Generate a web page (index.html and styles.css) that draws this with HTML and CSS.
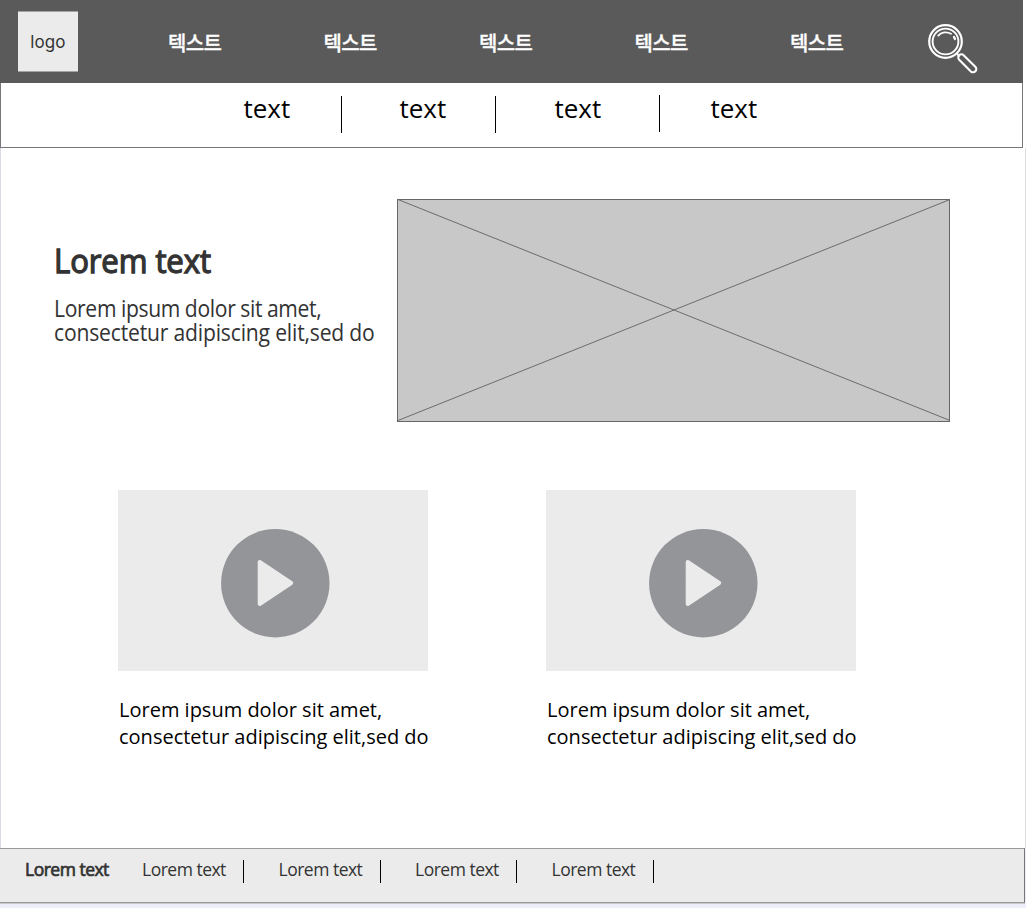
FILE: index.html
```html
<!DOCTYPE html>
<html lang="ko">
<head>
<meta charset="utf-8">
<title>Lorem text</title>
<link rel="stylesheet" href="styles.css">
</head>
<body>
<div class="page">
  <header class="header">
    <div class="logo">logo</div>
    <nav class="nav">
      <span>텍스트</span><span>텍스트</span><span>텍스트</span><span>텍스트</span><span>텍스트</span>
    </nav>
    <svg class="search" viewBox="0 0 50 50" fill="none" stroke="#fff" stroke-linecap="round" stroke-linejoin="round">
      <circle cx="17.5" cy="17.5" r="16.3" stroke-width="2.2"/>
      <circle cx="17.5" cy="17.5" r="12.9" stroke-width="1.9"/>
      <path d="M10.3 11.6C13.2 8.2 18.5 7.1 23 9.8" stroke-width="1.8"/>
      <path d="M26 13L27 15" stroke-width="2.2"/>
      <path d="M29.3 30L31 31.7" stroke-width="2"/>
      <path d="M35.6 31.2L47.3 42.8A3.1 3.1 0 0 1 42.9 47.4L31.2 35.7A3.1 3.1 0 0 1 35.6 31.2Z" stroke-width="2.1"/>
    </svg>
  </header>
  <nav class="subnav">
    <span class="item">text</span><i class="bar"></i>
    <span class="item">text</span><i class="bar"></i>
    <span class="item">text</span><i class="bar"></i>
    <span class="item">text</span>
  </nav>
  <main class="main">
    <section class="hero">
      <div class="intro">
        <h1>Lorem text</h1>
        <p><span class="lead">Lorem ipsum dolor sit amet,</span><br>consectetur adipiscing elit,sed do</p>
      </div>
      <svg class="picture" viewBox="0 0 553 223">
        <rect x=".5" y=".5" width="552" height="222" fill="#c8c8c8" stroke="#666"/>
        <path d="M1 .5L553 221.5M1 221.5L553 .5" fill="none" stroke="#6c6c6c" stroke-width="1"/>
      </svg>
    </section>
    <section class="cards">
      <article class="card">
        <div class="video">
          <svg class="play" viewBox="0 0 109 109"><circle cx="54.3" cy="54.2" r="54.2" fill="#949599"/><path d="M38.7 33L70.2 54L38.7 75Z" fill="#ebebeb" stroke="#ebebeb" stroke-width="4" stroke-linejoin="round"/></svg>
        </div>
        <p>Lorem ipsum dolor sit amet,<br>consectetur adipiscing elit,sed do</p>
      </article>
      <article class="card">
        <div class="video">
          <svg class="play" viewBox="0 0 109 109"><circle cx="54.3" cy="54.2" r="54.2" fill="#949599"/><path d="M38.7 33L70.2 54L38.7 75Z" fill="#ebebeb" stroke="#ebebeb" stroke-width="4" stroke-linejoin="round"/></svg>
        </div>
        <p>Lorem ipsum dolor sit amet,<br>consectetur adipiscing elit,sed do</p>
      </article>
    </section>
  </main>
  <footer class="footer">
    <b class="brand">Lorem text</b>
    <span class="link">Lorem text</span>
    <span class="link">Lorem text</span>
    <span class="link">Lorem text</span>
    <span class="link">Lorem text</span>
  </footer>
</div>
</body>
</html>
```
FILE: styles.css
```css
* { box-sizing: border-box; }
body { margin: 0; background: #eeeefa; font-family: "Open Sans", "Noto Sans CJK KR", sans-serif; color: #000; }
.page { width: 1026px; height: 908px; overflow: hidden; display: flex; flex-direction: column; }
.header { width: 1023px; height: 83px; flex: none; background: #5a5a5a; display: flex; align-items: flex-start; padding: 11px 0 0 18px; box-shadow: 3px 0 0 #fff; }
.logo { width: 60px; height: 61px; background: #ebebeb; border: solid #a3a3a3; border-width: 1px 0; display: flex; align-items: center; justify-content: center; padding-top: 2px; font: 17px/1 Inter, sans-serif; letter-spacing: .1px; color: #333; }
.nav { display: grid; grid-template-columns: repeat(5, 155.5px); margin-left: 90px; padding-top: 17px; width: 760px; font: 500 20px/30px "Noto Sans CJK KR", sans-serif; letter-spacing: -.6px; color: #fff; -webkit-text-stroke: .3px #fff; }
.search { width: 50px; height: 50px; margin-top: 13px; flex: none; }
.subnav { width: 1023px; height: 65px; flex: none; background: #fff; border: 1px solid #777; border-top: 0; box-shadow: 3px 0 0 #fff; display: flex; padding: 8px 0 0 242px; font-size: 26px; line-height: 34px; }
.subnav .item { width: 98px; padding-left: .5px; }
.subnav .bar { width: 1px; height: 37px; background: #000; margin: 5px 57px 0 0; }
.subnav .item:nth-of-type(2) { width: 96px; }
.subnav .item:nth-of-type(3) { width: 105px; }
.subnav .bar:nth-of-type(2) { margin-right: 58px; }
.subnav .bar:nth-of-type(3) { margin: 4px 50px 0 0; }
.main { flex: none; height: 700px; background: #fff; border-left: 1px solid #d9d8e6; border-right: 1px solid #ddd; }
.hero { display: flex; padding: 51px 0 0 53px; }
.intro { width: 343px; color: #333; }
.intro h1 { margin: 39px 0 0; width: 180px; font-size: 33px; line-height: 46px; font-weight: 400; letter-spacing: -.1px; -webkit-text-stroke: 1.3px #333; transform: scaleX(.942); transform-origin: 0 0; }
.intro p { margin: 12px 0 0; width: 350px; font-size: 23px; line-height: 24px; letter-spacing: -.2px; white-space: nowrap; transform: scaleX(.918); transform-origin: 0 0; }
.lead { letter-spacing: -.36px; word-spacing: -.4px; }
.picture { width: 553px; height: 223px; display: block; }
.cards { display: flex; gap: 118px; padding: 68px 0 0 117px; }
.card { width: 310px; }
.video { height: 181px; background: #ebebeb; padding: 39px 0 0 103px; }
.play { width: 109px; height: 109px; display: block; }
.card p { margin: 25px 0 0 1px; font-size: 20px; line-height: 27.4px; white-space: nowrap; }
.footer { width: 1025px; height: 55px; flex: none; background: #ebebeb; border: solid #999; border-width: 1px 1px 1px 0; border-right-color: #777; box-shadow: 0 1px 0 #c8c8cc; display: flex; padding: 9px 0 0 25px; font-size: 17.5px; line-height: 23px; letter-spacing: -.5px; color: #333; }
.footer .brand { width: 117px; font-weight: 400; -webkit-text-stroke: .7px #333; }
.footer .link { width: 102px; height: 23px; margin: 2px 34.5px 0 0; line-height: 19px; border-right: 1px solid #000; }
```
